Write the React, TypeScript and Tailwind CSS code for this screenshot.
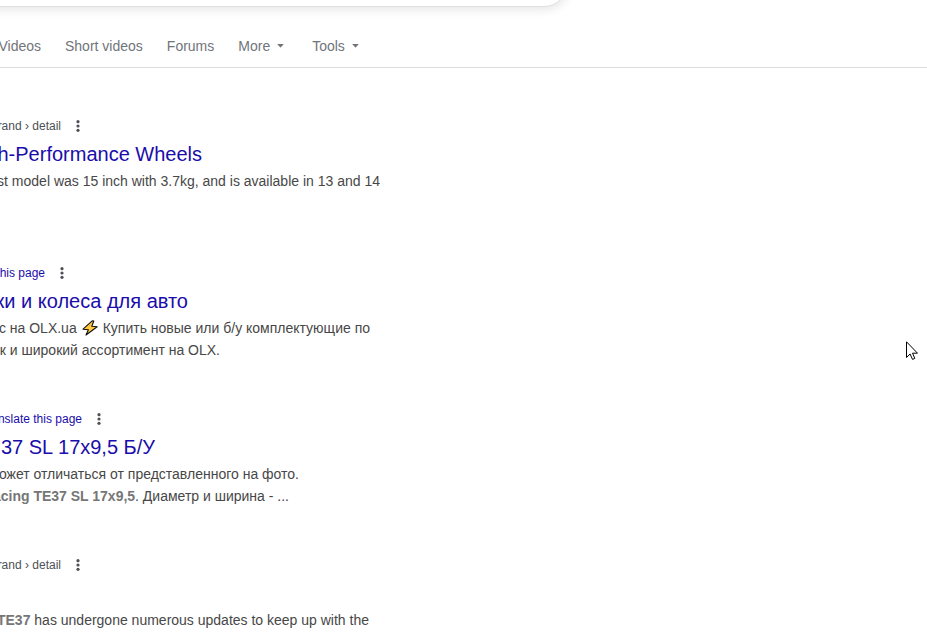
import type { ReactNode } from 'react';

const link = 'text-[#1a0dab] hover:underline';

function Caret() {
  return (
    <svg width="7" height="4" viewBox="0 0 7 4" fill="#70757a" aria-hidden="true">
      <path d="M.8 0h5.4q.5 0 .2.5L3.9 3.3a.6.6 0 0 1-.8 0L.6.5Q.3 0 .8 0z" />
    </svg>
  );
}

function Dots() {
  return (
    <button type="button" aria-label="About this result" className="flex h-6 w-6 items-center justify-center">
      <svg width="4" height="12" viewBox="0 0 4 12" fill="#4d5156" aria-hidden="true">
        <circle cx="2" cy="1.7" r="1.6" />
        <circle cx="2" cy="6" r="1.6" />
        <circle cx="2" cy="10.3" r="1.6" />
      </svg>
    </button>
  );
}

function Bolt() {
  return (
    <svg width="16" height="16" viewBox="0 0 16 16" role="img" aria-label="Lightning" className="mx-[5px] inline-block align-[-3px]">
      <path
        d="M10.2 .8 1 9.2 6.4 9.8 4 15 15.2 6.8 9.8 6.2 11.8 1z"
        fill="#ffc83d"
        stroke="#111"
        strokeWidth="1.1"
        strokeLinejoin="round"
      />
    </svg>
  );
}

/* A line whose beginning runs off the left edge of the page. */
function Line({ width, children }: { width: string; children: ReactNode }) {
  return (
    <span className={`flex justify-end overflow-hidden whitespace-nowrap ${width}`}>
      <span>{children}</span>
    </span>
  );
}

function Result({ source, title, children }: { source: ReactNode; title?: ReactNode; children: ReactNode }) {
  return (
    <article className="min-h-[146px] first:min-h-[147px]">
      <div className="flex h-[26px] items-center gap-[5px] text-xs text-[#4d5156]">
        {source}
        <Dots />
      </div>
      <h3 className="h-[31px] text-xl leading-[30px]">{title}</h3>
      <div className="text-sm leading-[22px] text-[#474747]">{children}</div>
    </article>
  );
}

function Crumb() {
  return (
    <Line width="w-[61px]">
      brand › detail
    </Line>
  );
}

export default function App() {
  return (
    <div className="relative min-h-screen overflow-hidden bg-white font-['Liberation_Sans',Arial,sans-serif]">
      <header className="border-b border-[#dadce0]">
        <div className="flex h-[7px] items-end">
          <input
            type="text"
            aria-label="Search"
            className="-ml-6 h-12 w-[592px] shrink-0 rounded-r-full border border-[#dfe1e5] bg-white px-10 shadow-[0_2px_8px_1px_rgba(64,60,67,0.12)] outline-none"
          />
        </div>
        <nav className="flex h-[60px] items-center gap-6 pt-[18px] text-sm text-[#70757a]">
          <a href="#videos">
            <Line width="w-[41px]">Videos</Line>
          </a>
          <a href="#short">Short videos</a>
          <a href="#forums">Forums</a>
          <button type="button" className="flex items-center gap-[7px] pr-1">
            More <Caret />
          </button>
          <button type="button" className="flex items-center gap-[7px] pr-1">
            Tools <Caret />
          </button>
        </nav>
      </header>

      <main className="pt-[45px]">
        <Result
          source={<Crumb />}
          title={
            <a href="#wheels" className={link}>
              <Line width="w-[202px]">High-Performance Wheels</Line>
            </a>
          }
        >
          <Line width="w-[380px]">st model was 15 inch with 3.7kg, and is available in 13 and 14</Line>
        </Result>
        <Result
          source={
            <a href="#translate-olx" className={link}>
              <Line width="w-[45px]">this page</Line>
            </a>
          }
          title={
            <a href="#olx" className={link}>
              <Line width="w-[188px]">ки и колеса для авто</Line>
            </a>
          }
        >
          <Line width="w-[370px]">
            с на OLX.ua
            <Bolt />
            Купить новые или б/у комплектующие по
          </Line>
          <Line width="w-[220px]">к и широкий ассортимент на OLX.</Line>
        </Result>
        <Result
          source={
            <a href="#translate-te37" className={link}>
              <Line width="w-[82px]">Translate this page</Line>
            </a>
          }
          title={
            <a href="#te37" className={link}>
              <Line width="w-[155px]">37 SL 17x9,5 Б/У</Line>
            </a>
          }
        >
          <Line width="w-[299px]">ожет отличаться от представленного на фото.</Line>
          <Line width="w-[289px]">
            <b className="text-[#767676]">Racing TE37 SL 17x9,5</b>. Диаметр и ширина - ...
          </Line>
        </Result>
        <Result source={<Crumb />}>
          <Line width="w-[369px]">
            <b className="text-[#767676]">TE37</b> has undergone numerous updates to keep up with the
          </Line>
        </Result>
      </main>

      <svg
        width="12"
        height="19"
        viewBox="0 0 12 19"
        aria-hidden="true"
        className="pointer-events-none absolute top-[341px] left-[906px]"
      >
        <path
          d="M.5 .8v15.7l3.6-3.5 2.4 5.4 2.3-1-2.3-5.2h5z"
          fill="#fff"
          stroke="#000"
          strokeWidth="1"
        />
      </svg>
    </div>
  );
}
